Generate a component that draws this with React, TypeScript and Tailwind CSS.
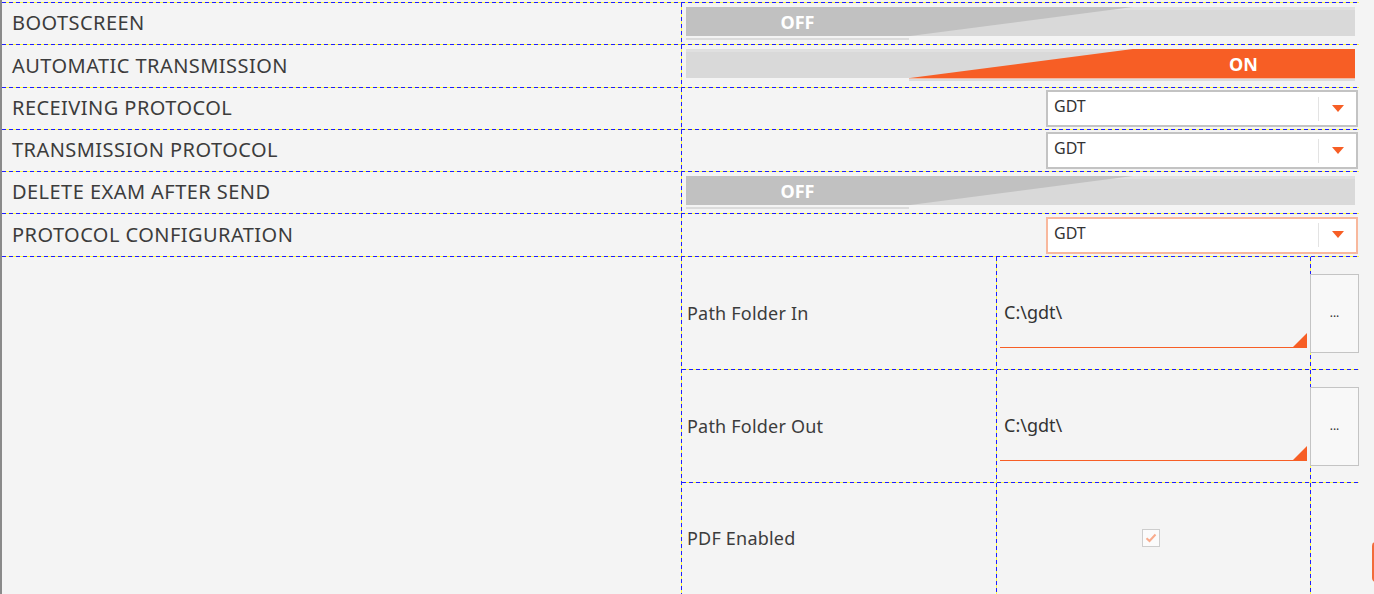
import React from 'react';

const HLine = () => (
  <div className="h-px shrink-0 bg-[image:repeating-linear-gradient(90deg,#1f1fff_0_4px,#ffff3a_4px_7px)]" />
);

const VLine = () => (
  <div className="w-px self-stretch shrink-0 bg-[image:repeating-linear-gradient(180deg,#1f1fff_0_4px,#ffff3a_4px_7px)]" />
);

function Toggle({ on }: { on: boolean }) {
  return (
    <div className="relative w-[669px] h-[33px]">
      <div className="absolute left-0 top-0 w-full h-[29px] bg-[#d9d9d9] border-t-[3px] border-[#e0e0e0]" />
      {on ? (
        <>
          <div className="absolute left-0 top-0 w-full h-[29px] bg-[#f75e25] [clip-path:polygon(66.8%_0,100%_0,100%_100%,33.5%_100%)]" />
          <div className="absolute right-0 top-px w-1/3 h-[29px] flex items-center justify-center text-white font-bold text-[18px]">
            ON
          </div>
          <div className="absolute left-1/3 top-[29px] w-2/3 h-px bg-[#f3b9a2]" />
          <div className="absolute left-1/3 top-[30px] w-2/3 h-[2px] bg-[#dcdcdc]" />
        </>
      ) : (
        <>
          <div className="absolute left-0 top-0 w-full h-[29px] bg-[#c1c1c1] [clip-path:polygon(0_0,66.8%_0,33.5%_100%,0_100%)]" />
          <div className="absolute left-0 top-px w-1/3 h-[29px] flex items-center justify-center text-white font-bold text-[18px]">
            OFF
          </div>
          <div className="absolute left-0 top-[31px] w-1/3 h-[2px] bg-[#dcdcdc]" />
        </>
      )}
    </div>
  );
}

function Select({ active = false }: { active?: boolean }) {
  return (
    <div
      className={`w-[312px] h-[37px] mr-px border-2 bg-white flex items-center ${
        active ? 'border-[#f8b89d]' : 'border-[#c3c3c3]'
      }`}
    >
      <span className="flex-1 pl-[6px] pb-[5px] text-[16px] text-[#333]">GDT</span>
      <div className="w-px h-[24px] bg-[#e3e3e3]" />
      <div className="w-[37px] flex justify-center">
        <svg width="12" height="8" viewBox="0 0 12 8">
          <path d="M0 0H12L6 7Z" fill="#f75e25" />
        </svg>
      </div>
    </div>
  );
}

function Row({ label, h, children, justify = 'start' }: { label: string; h: string; children: React.ReactNode; justify?: string }) {
  return (
    <div className={`flex ${h}`}>
      <div className="w-[679px] pl-[10px] pb-px flex items-center text-[20px] tracking-[0.45px] text-[#3c3c3c]">{label}</div>
      <VLine />
      {justify === 'end' ? (
        <div className="flex-1 flex items-center justify-end">{children}</div>
      ) : (
        <div className="flex-1 pl-[4px] pt-[4px]">{children}</div>
      )}
    </div>
  );
}

function PathField({ label, value }: { label: string; value: string }) {
  return (
    <div className="flex h-[112px]">
      <div className="w-[314px] pl-[5px] flex items-center text-[18px] tracking-[0.2px] text-[#3c3c3c]">{label}</div>
      <VLine />
      <div className="w-[313px] px-[3px] flex items-center">
        <div className="relative w-full h-[70px] flex items-center border-b border-[#f75e25]">
          <span className="pl-[4px] text-[18px] text-[#333]">{value}</span>
          <svg className="absolute right-0 bottom-0" width="14" height="14" viewBox="0 0 14 14">
            <path d="M14 0V14H0Z" fill="#f75e25" />
          </svg>
        </div>
      </div>
      <VLine />
      <div className="flex-1 flex items-center">
        <button className="-ml-px w-[49px] h-[79px] border border-[#c4c4c4] bg-[#f8f8f8] flex items-center justify-center text-[12px] text-[#333]">
          ...
        </button>
      </div>
    </div>
  );
}

export default function App() {
  return (
    <div className="relative w-[1374px] h-[594px] overflow-hidden bg-[#f4f4f4] border-l-2 border-[#8a8a8a] font-['Noto_Sans',sans-serif]">
      <div className="w-[1357px] pt-[2px] flex flex-col">
        <HLine />
        <Row label="BOOTSCREEN" h="h-[41px]">
          <Toggle on={false} />
        </Row>
        <HLine />
        <Row label="AUTOMATIC TRANSMISSION" h="h-[42px]">
          <Toggle on />
        </Row>
        <HLine />
        <Row label="RECEIVING PROTOCOL" h="h-[41px]" justify="end">
          <Select />
        </Row>
        <HLine />
        <Row label="TRANSMISSION PROTOCOL" h="h-[41px]" justify="end">
          <Select />
        </Row>
        <HLine />
        <Row label="DELETE EXAM AFTER SEND" h="h-[41px]">
          <Toggle on={false} />
        </Row>
        <HLine />
        <Row label="PROTOCOL CONFIGURATION" h="h-[42px]" justify="end">
          <Select active />
        </Row>
        <HLine />
        <div className="flex h-[340px]">
          <div className="w-[679px]" />
          <VLine />
          <div className="flex-1 flex flex-col">
            <PathField label="Path Folder In" value="C:\gdt\" />
            <HLine />
            <PathField label="Path Folder Out" value="C:\gdt\" />
            <HLine />
            <div className="flex flex-1">
              <div className="w-[314px] pl-[5px] pb-[4px] flex items-center text-[18px] tracking-[0.2px] text-[#3c3c3c]">PDF Enabled</div>
              <VLine />
              <div className="w-[313px] pr-[6px] pb-[4px] flex items-center justify-center">
                <div className="w-[18px] h-[18px] border border-[#cdcdcd] bg-[#fbfbfb] flex items-center justify-center">
                  <svg width="12" height="10" viewBox="0 0 12 10">
                    <path d="M1.5 5.2L4.5 8L10.5 1.5" stroke="#f9ab8c" strokeWidth="2" fill="none" />
                  </svg>
                </div>
              </div>
              <VLine />
              <div className="flex-1" />
            </div>
          </div>
        </div>
      </div>
      <div className="absolute left-[1370px] top-[542px] w-[10px] h-[40px] rounded-[4px] bg-[#f26b3a]" />
    </div>
  );
}
